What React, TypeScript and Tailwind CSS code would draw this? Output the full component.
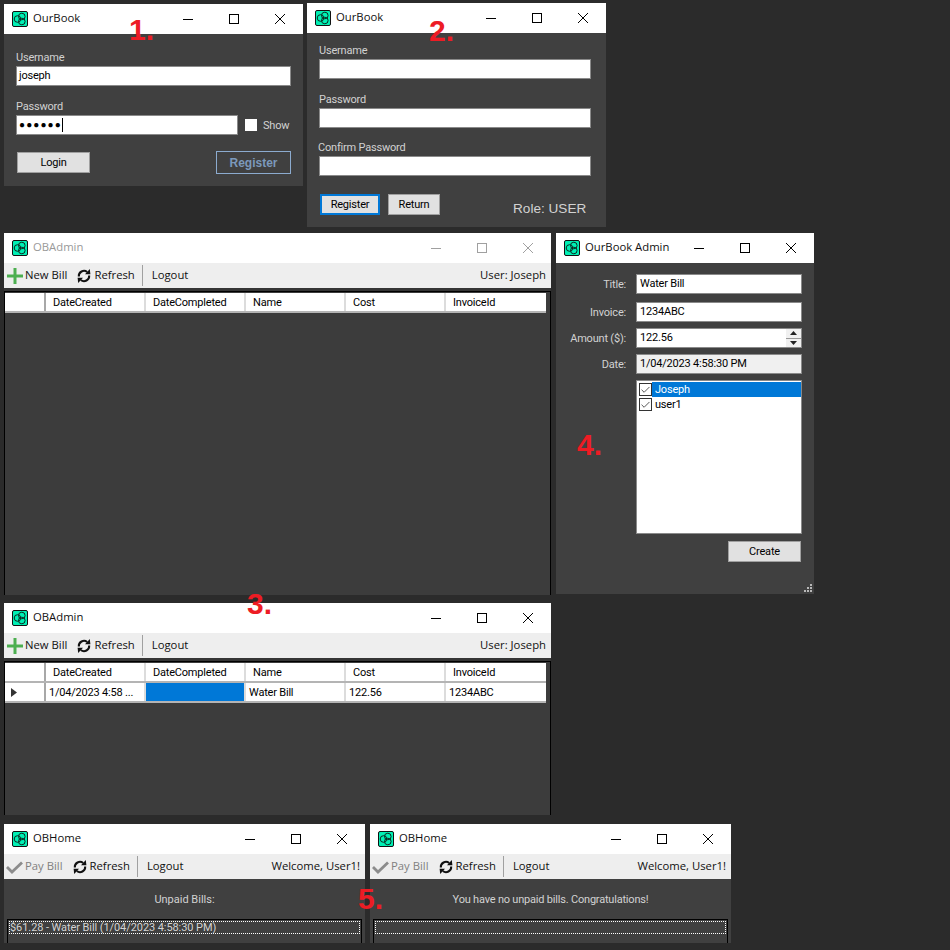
import type { ReactNode } from 'react';
import { Check } from 'lucide-react';

const COLUMNS = ['DateCreated', 'DateCompleted', 'Name', 'Cost', 'InvoiceId'];

function AppIcon() {
  return (
    <svg width="16" height="16" viewBox="0 0 16 16" className="shrink-0">
      <rect x="0.5" y="0.5" width="15" height="15" rx="1.5" fill="#00f0b4" stroke="#111" />
      <circle cx="9.8" cy="5.5" r="3.3" fill="none" stroke="#0b2a22" />
      <circle cx="5.5" cy="8" r="3.3" fill="none" stroke="#0b2a22" />
      <circle cx="9.8" cy="10.5" r="3.3" fill="none" stroke="#0b2a22" />
    </svg>
  );
}

function RefreshIcon() {
  return (
    <svg width="14" height="16" viewBox="0 0 14 16" className="shrink-0">
      <path d="M1.8 8.5A5.2 5.2 0 0 1 10.2 4" stroke="#111" strokeWidth="2" fill="none" />
      <path d="M8 6.2H13.4L12.8 1Z" fill="#111" />
      <path d="M12.2 7.5A5.2 5.2 0 0 1 3.8 12" stroke="#111" strokeWidth="2" fill="none" />
      <path d="M6 9.8H0.6L1.2 15Z" fill="#111" />
    </svg>
  );
}

function WindowControls({ dim }: { dim?: boolean }) {
  const stroke = dim ? '#a0a0a0' : '#000';
  return (
    <div className="flex h-full shrink-0">
      <div className="flex h-full w-[46px] items-center justify-center">
        <svg width="10" height="10" viewBox="0 0 10 10">
          <path d="M0 5.5H10" stroke={stroke} fill="none" />
        </svg>
      </div>
      <div className="flex h-full w-[46px] items-center justify-center">
        <svg width="10" height="10" viewBox="0 0 10 10">
          <rect x="0.5" y="0.5" width="9" height="9" stroke={stroke} fill="none" />
        </svg>
      </div>
      <div className="flex h-full w-[46px] items-center justify-center">
        <svg width="10" height="10" viewBox="0 0 10 10">
          <path d="M0 0L10 10M10 0L0 10" stroke={stroke} fill="none" />
        </svg>
      </div>
    </div>
  );
}

function Win({
  title,
  className,
  dim,
  children,
}: {
  title: string;
  className: string;
  dim?: boolean;
  children: ReactNode;
}) {
  return (
    <div className={`absolute flex flex-col overflow-hidden bg-[#404040] ${className}`}>
      <div className="flex h-[30px] shrink-0 items-center bg-white pl-2">
        <AppIcon />
        <span
          className={`ml-[5px] flex-1 whitespace-nowrap pb-[2px] font-['Open_Sans',sans-serif] text-[11.3px] tracking-normal ${dim ? 'text-[#999]' : 'text-[#111]'}`}
        >
          {title}
        </span>
        <WindowControls dim={dim} />
      </div>
      {children}
    </div>
  );
}

function Label({ children, className = '' }: { children: ReactNode; className?: string }) {
  return <div className={`h-[14px] pt-px text-[11px] leading-[14px] text-[#d2d2d2] ${className}`}>{children}</div>;
}

function Input({
  value,
  className = '',
  bg = 'bg-white',
}: {
  value?: ReactNode;
  className?: string;
  bg?: string;
}) {
  return (
    <div className={`flex h-5 items-center border border-[#8a8a8a] pl-[2px] text-[11px] text-black ${bg} ${className}`}>
      {value}
    </div>
  );
}

function Button({
  children,
  className = '',
  border = 'border border-[#a0a0a0]',
}: {
  children: ReactNode;
  className?: string;
  border?: string;
}) {
  return (
    <div
      className={`flex h-[21px] items-center justify-center bg-[#e1e1e1] pt-[2px] text-[11px] text-black ${border} ${className}`}
    >
      {children}
    </div>
  );
}

function Toolbar({ first, right, disabled }: { first: string; right: string; disabled?: boolean }) {
  return (
    <div className="flex h-[25px] shrink-0 items-center bg-[#eeeeee] pl-[2px] pr-[5px] font-['Open_Sans',sans-serif] text-[11.3px] tracking-normal text-[#111]">
      {disabled ? (
        <svg width="17" height="16" viewBox="0 0 17 16" className="shrink-0">
          <path d="M1 8L6 13L16 3.5" stroke="#8c8c8c" strokeWidth="2.8" fill="none" />
        </svg>
      ) : (
        <svg width="16" height="16" viewBox="0 0 16 16" className="ml-[1px] shrink-0">
          <path d="M8 0V16M0 8H16" stroke="#4caf50" strokeWidth="3" fill="none" />
        </svg>
      )}
      <span className={`ml-[2px] ${disabled ? 'text-[#808080]' : ''}`}>{first}</span>
      <div className="ml-[10px]">
        <RefreshIcon />
      </div>
      <span className="ml-[3px]">Refresh</span>
      <div className="ml-[7px] h-[21px] w-px bg-[#a0a0a0]" />
      <span className="ml-[9px]">Logout</span>
      <span className="ml-auto">{right}</span>
    </div>
  );
}

function GridRow({ cells, head }: { cells: ReactNode[]; head: ReactNode }) {
  return (
    <div className="flex h-5 w-[541px] border-b-2 border-[#b4b4b4] bg-white text-[11px] text-black">
      <div className="flex w-[41px] shrink-0 items-center border-r-2 border-[#a8a8a8] pl-[6px]">{head}</div>
      {cells.map((c, i) => (
        <div
          key={i}
          className={`flex w-[100px] shrink-0 items-center ${i < 4 ? 'border-r-2 border-[#dcdcdc]' : ''}`}
        >
          {c}
        </div>
      ))}
    </div>
  );
}

function BillGrid({ hasRow }: { hasRow?: boolean }) {
  return (
    <div className="flex-1 bg-[#353535] pt-[3px]">
      <div className="h-full border-x border-t border-black bg-[#3c3c3c] pt-px">
        <GridRow head={null} cells={COLUMNS.map((c) => <span className="pl-[7px] pt-[2px]">{c}</span>)} />
        {hasRow && (
          <GridRow
            head={
              <svg width="6" height="9" viewBox="0 0 6 9">
                <path d="M0 0L6 4.5L0 9Z" fill="#333" />
              </svg>
            }
            cells={[
              <span className="pl-[3px] pt-[2px]">1/04/2023 4:58 ...</span>,
              <div className="h-full w-full bg-[#0078d7]" />,
              <span className="pl-[3px] pt-[2px]">Water Bill</span>,
              <span className="pl-[3px] pt-[2px]">122.56</span>,
              <span className="pl-[3px] pt-[2px]">1234ABC</span>,
            ]}
          />
        )}
      </div>
    </div>
  );
}

function AdminField({ label, children, mt }: { label: string; children: ReactNode; mt: string }) {
  return (
    <div className={`flex items-center ${mt}`}>
      <div className="w-[70px] pt-[2px] text-right text-[11px] text-[#d2d2d2]">{label}</div>
      <div className="ml-[10px] w-[166px]">{children}</div>
    </div>
  );
}

function CheckItem({ label, selected }: { label: string; selected?: boolean }) {
  return (
    <div className="flex h-[15px] items-center pl-[2px]">
      <div className="flex size-[13px] shrink-0 items-center justify-center border border-[#333] bg-white">
        <Check size={12} strokeWidth={1.8} className="text-[#333]" />
      </div>
      <div
        className={`flex h-full flex-1 items-center pl-[3px] pt-[2px] ${selected ? 'bg-[#0078d7] text-white' : 'text-black'}`}
      >
        {label}
      </div>
    </div>
  );
}

function Marker({ children, className }: { children: ReactNode; className: string }) {
  return (
    <span
      className={`absolute z-10 font-['Liberation_Sans',sans-serif] text-[30px] font-bold leading-none tracking-normal text-[#ed1c24] ${className}`}
    >
      {children}
    </span>
  );
}

export default function App() {
  return (
    <div className="relative h-[950px] w-[950px] overflow-hidden bg-[#2b2b2b] font-['Roboto',sans-serif] tracking-[-0.2px]">
      <Win title="OurBook" className="left-1 top-1 h-[182px] w-[299px]">
        <div className="px-3 pt-4">
          <Label>Username</Label>
          <Input value="joseph" className="mt-[2px] w-[275px] pt-px" />
          <Label className="mt-[13px]">Password</Label>
          <div className="mt-[2px] flex items-center">
            <Input
              className="w-[222px]"
              value={
                <>
                  <span className="text-[10px] leading-none tracking-[1.1px]">●●●●●●</span>
                  <span className="h-[14px] w-px bg-black" />
                </>
              }
            />
            <div className="ml-[7px] size-3 bg-white" />
            <Label className="ml-[6px] text-[#b4b4b4]">Show</Label>
          </div>
          <div className="mt-4 flex items-center justify-between pl-px">
            <Button className="w-[73px]">Login</Button>
            <div className="flex h-[23px] w-[75px] items-center justify-center border border-[#8cabcf] font-['Liberation_Sans',sans-serif] text-[12px] font-bold tracking-normal text-[#7c99bb]">
              Register
            </div>
          </div>
        </div>
      </Win>

      <Win title="OurBook" className="left-[307px] top-[3px] h-[224px] w-[299px]">
        <div className="px-3 pt-[10px]">
          <Label>Username</Label>
          <Input className="mt-[2px] w-[272px]" />
          <Label className="mt-[13px]">Password</Label>
          <Input className="mt-[2px] w-[272px]" />
          <Label className="-ml-px mt-3">Confirm Password</Label>
          <Input className="mt-[2px] w-[272px]" />
          <div className="mt-[18px] flex h-[21px] items-center pl-px">
            <Button className="w-[60px]" border="border-2 border-[#0078d7]">
              Register
            </Button>
            <Button className="ml-2 w-[52px]">Return</Button>
            <span className="ml-[73px] mt-[9px] font-['Liberation_Sans',sans-serif] text-[13.6px] tracking-normal text-[#d2d2d2]">
              Role: USER
            </span>
          </div>
        </div>
      </Win>

      <Win title="OBAdmin" dim className="left-1 top-[233px] h-[362px] w-[547px]">
        <Toolbar first="New Bill" right="User: Joseph" />
        <BillGrid />
      </Win>

      <Win title="OurBook Admin" className="left-[556px] top-[233px] h-[361px] w-[258px]">
        <div className="pt-[11px]">
          <AdminField label="Title:" mt="">
            <Input value="Water Bill" className="pl-[3px] pt-px" />
          </AdminField>
          <AdminField label="Invoice:" mt="mt-2">
            <Input value="1234ABC" className="pl-[3px] pt-px" />
          </AdminField>
          <AdminField label="Amount ($):" mt="mt-[6px]">
            <Input
              className="justify-between pl-[3px]"
              value={
                <>
                  <span>122.56</span>
                  <span className="flex h-full w-[15px] flex-col bg-[#f0f0f0]">
                    <span className="flex flex-1 items-center justify-center border-b border-[#999]">
                      <svg width="7" height="4" viewBox="0 0 7 4">
                        <path d="M0 4L3.5 0L7 4Z" fill="#222" />
                      </svg>
                    </span>
                    <span className="flex flex-1 items-center justify-center">
                      <svg width="7" height="4" viewBox="0 0 7 4">
                        <path d="M0 0L3.5 4L7 0Z" fill="#222" />
                      </svg>
                    </span>
                  </span>
                </>
              }
            />
          </AdminField>
          <AdminField label="Date:" mt="mt-[6px]">
            <Input value="1/04/2023 4:58:30 PM" bg="bg-[#f0f0f0]" className="pl-[3px] pt-px" />
          </AdminField>
          <div className="ml-20 mt-[6px] h-[154px] w-[166px] border border-[#8a8a8a] bg-white pt-px text-[11px]">
            <CheckItem label="Joseph" selected />
            <CheckItem label="user1" />
          </div>
          <div className="ml-[172px] mt-[7px]">
            <Button className="w-[73px]">Create</Button>
          </div>
        </div>
        <div className="absolute bottom-[2px] right-[2px] grid grid-cols-3 gap-px">
          {[0, 0, 1, 0, 1, 1, 1, 1, 1].map((on, i) => (
            <span key={i} className={`size-[2px] ${on ? 'bg-[#b8b8b8]' : ''}`} />
          ))}
        </div>
      </Win>

      <Win title="OBAdmin" className="left-1 top-[603px] h-[212px] w-[547px]">
        <Toolbar first="New Bill" right="User: Joseph" />
        <BillGrid hasRow />
      </Win>

      <Win title="OBHome" className="left-1 top-[824px] h-[119px] w-[361px]">
        <Toolbar first="Pay Bill" right="Welcome, User1!" disabled />
        <div className="mt-[14px] h-[14px] text-center text-[11px] leading-[14px] tracking-normal text-[#d2d2d2]">
          Unpaid Bills:
        </div>
        <div className="mx-[3px] mt-3 flex-1 border-x border-t border-black px-px pt-px">
          <div className="h-[13px] border border-dotted border-white text-[11px] leading-[11px] tracking-[-0.08px] text-[#d2d2d2]">
            $61.28 - Water Bill (1/04/2023 4:58:30 PM)
          </div>
        </div>
      </Win>

      <Win title="OBHome" className="left-[370px] top-[824px] h-[119px] w-[361px]">
        <Toolbar first="Pay Bill" right="Welcome, User1!" disabled />
        <div className="mt-[14px] h-[14px] text-center text-[11px] leading-[14px] text-[#d2d2d2]">
          You have no unpaid bills. Congratulations!
        </div>
        <div className="mx-[3px] mt-3 flex-1 border-x border-t border-black px-px pt-px">
          <div className="h-[13px] border border-dotted border-white" />
        </div>
      </Win>

      <Marker className="left-[129px] top-[15px]">1.</Marker>
      <Marker className="left-[429px] top-[16px]">2.</Marker>
      <Marker className="left-[247px] top-[589px]">3.</Marker>
      <Marker className="left-[577px] top-[430px]">4.</Marker>
      <Marker className="left-[358px] top-[884px]">5.</Marker>
    </div>
  );
}
